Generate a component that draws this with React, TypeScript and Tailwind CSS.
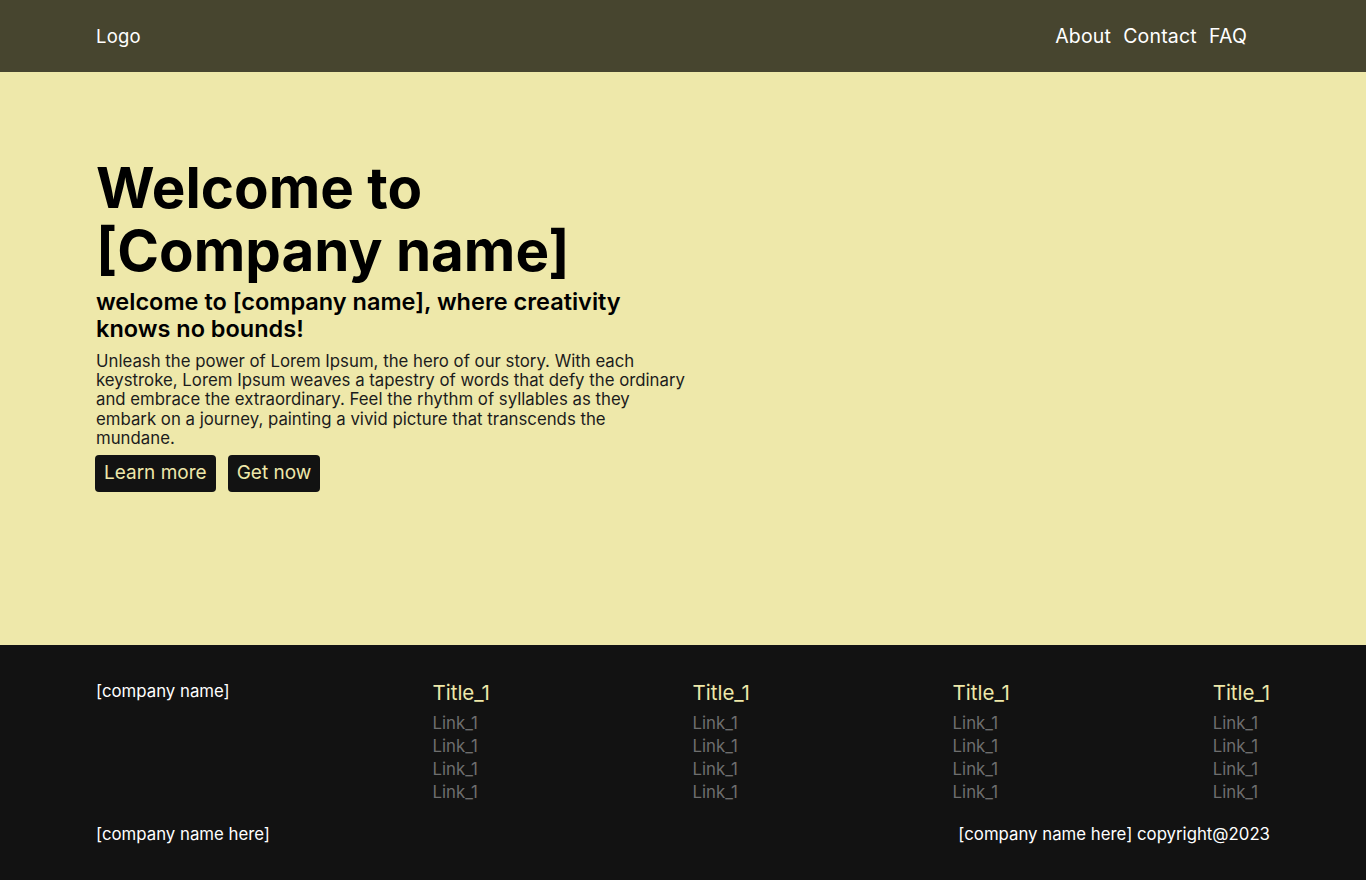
import React from "react";

const columns = [0, 1, 2, 3];

export default function App() {
  return (
    <div className="min-h-[880px] flex flex-col font-['Inter',sans-serif]">
      <header className="h-[72px] bg-[#47452f] flex items-center justify-between px-24 pt-px text-white">
        <div className="text-[18.5px] tracking-[0.2px]">Logo</div>
        <nav className="flex gap-3 mr-[23px] text-[19.5px] tracking-[0.2px]">
          <a>About</a>
          <a>Contact</a>
          <a>FAQ</a>
        </nav>
      </header>

      <main className="h-[573px] bg-[#eee8aa] px-24 pt-[84px]">
        <div className="w-[592px]">
          <h1 className="text-[56.5px] leading-[63px] font-bold text-black">
            Welcome to [Company name]
          </h1>
          <h2 className="mt-[6px] text-[23.5px] leading-[27px] font-semibold text-black">
            welcome to [company name], where creativity knows no bounds!
          </h2>
          <p className="mt-[10px] text-[16.8px] leading-[19.2px] text-[#1c1c1c]">
            Unleash the power of Lorem Ipsum, the hero of our story. With each keystroke, Lorem Ipsum weaves a
            tapestry of words that defy the ordinary and embrace the extraordinary. Feel the rhythm of syllables as
            they embark on a journey, painting a vivid picture that transcends the mundane.
          </p>
          <div className="mt-[7px] flex gap-3 -ml-px">
            <button className="h-[37px] px-[9px] rounded bg-[#121212] text-[#eee8aa] text-[19px]">Learn more</button>
            <button className="h-[37px] px-[9px] rounded bg-[#121212] text-[#eee8aa] text-[19px]">Get now</button>
          </div>
        </div>
      </main>

      <footer className="flex-1 h-[235px] bg-[#121212] px-24 pt-[36px]">
        <div className="flex justify-between">
          <div className="text-white text-[16.8px] leading-[20px]">[company name]</div>
          {columns.map((c) => (
            <div key={c} className="flex flex-col">
              <div className="text-[#eee8aa] text-[20.5px] leading-[24px] mb-[7px]">Title_1</div>
              <a className="text-[#6e6e6e] text-[16.8px] leading-[23px]">Link_1</a>
              <a className="text-[#6e6e6e] text-[16.8px] leading-[23px]">Link_1</a>
              <a className="text-[#6e6e6e] text-[16.8px] leading-[23px]">Link_1</a>
              <a className="text-[#6e6e6e] text-[16.8px] leading-[23px]">Link_1</a>
            </div>
          ))}
        </div>
        <div className="mt-[20px] flex justify-between text-white text-[16.8px] leading-[20px]">
          <div>[company name here]</div>
          <div>[company name here] copyright@2023</div>
        </div>
      </footer>
    </div>
  );
}
